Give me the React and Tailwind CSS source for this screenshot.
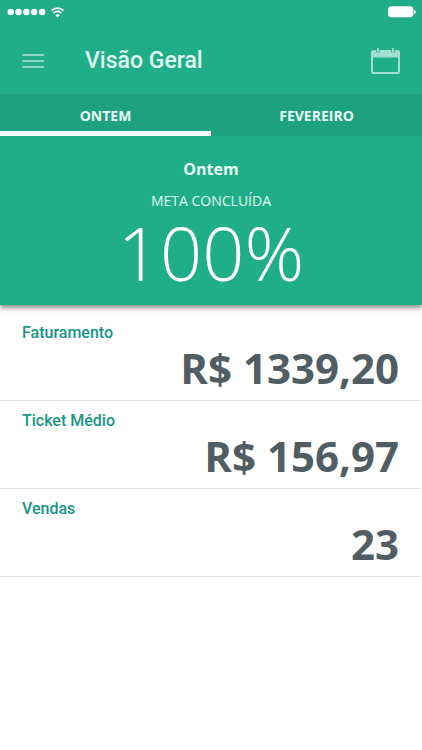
import { clsx } from 'clsx';

const TABS = [
  { id: 'ontem', label: 'Ontem' },
  { id: 'fevereiro', label: 'Fevereiro' },
];

const METRICS = [
  { label: 'Faturamento', value: 'R$ 1339,20' },
  { label: 'Ticket Médio', value: 'R$ 156,97' },
  { label: 'Vendas', value: '23' },
];

function StatusBar() {
  return (
    <div className="flex h-6 items-center justify-between pr-1.5 pl-[7px] text-white">
      <div className="flex items-center gap-[5px]">
        <svg className="h-2 w-[39px]" viewBox="0 0 39 8" fill="currentColor" aria-hidden="true">
          <circle cx="3.7" cy="4" r="3.2" />
          <circle cx="11.5" cy="4" r="3.2" />
          <circle cx="19.4" cy="4" r="3.2" />
          <circle cx="27.2" cy="4" r="3.2" />
          <circle cx="35.1" cy="4" r="3.2" />
        </svg>
        <svg className="h-[11px] w-[13px]" viewBox="0 0 13 11" fill="none" stroke="currentColor" aria-hidden="true">
          <path d="M0.5 3.7a8.4 8.4 0 0 1 12 0" strokeWidth="1.8" />
          <path d="M2.6 6.1a5.4 5.4 0 0 1 7.8 0" strokeWidth="1.7" />
          <path d="M6.5 10.4 4.4 8.2a2.9 2.9 0 0 1 4.2 0z" fill="currentColor" stroke="none" />
        </svg>
      </div>
      <svg className="h-3 w-7" viewBox="0 0 28 12" fill="currentColor" aria-hidden="true">
        <rect x="0" y="0.3" width="25.4" height="11" rx="3.6" />
        <path d="M26 3.9c1.2.2 1.8 1 1.8 2s-.6 1.8-1.8 2z" />
      </svg>
    </div>
  );
}

function AppBar() {
  return (
    <div className="flex h-[70px] items-center px-[22px] pt-1">
      <button type="button" className="text-[#8fd7c4]" aria-label="Menu">
        <svg className="h-4 w-[22px]" viewBox="0 0 22 16" fill="currentColor" aria-hidden="true">
          <rect x="0.2" y="1" width="21.6" height="2" />
          <rect x="0.2" y="7" width="21.6" height="2" />
          <rect x="0.2" y="13" width="21.6" height="2" />
        </svg>
      </button>
      <h1 className="ml-[41px] flex-1 font-['Roboto',sans-serif] text-[23px] leading-8 font-medium text-[#e0f8f2]">
        Visão Geral
      </h1>
      <button type="button" className="text-[#a2dfcf]" aria-label="Calendário">
        <svg className="h-[26px] w-[29px]" viewBox="0 0 29 26" fill="none" aria-hidden="true">
          <rect x="1" y="3" width="27" height="22" rx="1.8" stroke="currentColor" strokeWidth="2" />
          <path d="M1 3h27v6.500H1z" fill="currentColor" />
          <path d="M6.9 2v2.6M22 2v2.6" stroke="#20ae88" strokeWidth="3.6" />
          <path d="M6.9 0.2v4M22 0.2v4" stroke="currentColor" strokeWidth="2" />
        </svg>
      </button>
    </div>
  );
}

function Tabs({ active }) {
  return (
    <div role="tablist" className="grid grid-cols-2 bg-[#1ea17e]">
      {TABS.map((tab) => (
        <button
          key={tab.id}
          type="button"
          role="tab"
          aria-selected={tab.id === active}
          className={clsx(
            'h-[42px] border-b-5 pt-[7px] text-sm font-bold text-[#e9fbf6] uppercase',
            tab.id === active ? 'border-white' : 'border-transparent',
          )}
        >
          {tab.label}
        </button>
      ))}
    </div>
  );
}

function Metric({ label, value }) {
  return (
    <div className="border-b border-[#dedede] pt-2 pr-[21px] pb-[9px] pl-[22px]">
      <dt className="font-['Roboto',sans-serif] text-base leading-6 font-medium text-[#159685]">
        {label}
      </dt>
      <dd className="text-right text-[42px] leading-[46px] font-bold text-[#505d64]">{value}</dd>
    </div>
  );
}

export default function App() {
  return (
    <div className="min-h-screen bg-white font-['Open_Sans',sans-serif]">
      <header className="bg-[#20ae88] shadow-[0_3px_5px_rgba(0,0,0,0.45)]">
        <StatusBar />
        <AppBar />
        <Tabs active="ontem" />
        <section className="flex flex-col items-center pt-[21px] pb-3 text-center">
          <h2 className="text-base leading-6 font-bold text-[#e9fbf6]">Ontem</h2>
          <p className="mt-2 text-sm leading-6 text-[#e0f8f2] uppercase">Meta concluída</p>
          <p className="text-[74px] leading-[80px] font-light text-white">100%</p>
        </section>
      </header>
      <main className="pt-2 pr-0.5">
        <dl>
          {METRICS.map((metric) => (
            <Metric key={metric.label} label={metric.label} value={metric.value} />
          ))}
        </dl>
      </main>
    </div>
  );
}
